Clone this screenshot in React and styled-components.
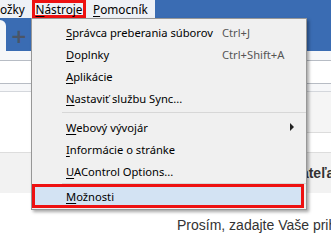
import styled, { createGlobalStyle } from "styled-components";

const GlobalStyle = createGlobalStyle`
    html, body {
        margin: 0;
        padding: 0;
        width: 331px;
        height: 246px;
        overflow: hidden;
        background: #ffffff;
    }
`;

const menuItems = [
    { label: "Správca preberania súborov", key: 0, shortcut: "Ctrl+J" },
    { label: "Doplnky", key: 0, shortcut: "Ctrl+Shift+A" },
    { label: "Aplikácie", key: 0 },
    { label: "Nastaviť službu Sync...", key: 0 },
    { separator: true },
    { label: "Webový vývojár", key: 0, submenu: true },
    { label: "Informácie o stránke", key: 0 },
    { label: "UAControl Options...", key: 0 },
    { separator: true, tight: true },
    { label: "Možnosti", key: 0, marked: true },
];

const AccessKey = ({ text, index }) => (
    <>
        {text.slice(0, index)}
        <U>{text.charAt(index)}</U>
        {text.slice(index + 1)}
    </>
);

const App = () => {
    return (
        <Window>
            <GlobalStyle />
            <MenuBar>
                <BarItems>
                    <BarItem $width="32px" $align="flex-start">ožky</BarItem>
                    <BarItem $width="54px" $marked><AccessKey text="Nástroje" index={0} /></BarItem>
                    <BarItem $pad="0 0 0 7px"><AccessKey text="Pomocník" index={0} /></BarItem>
                </BarItems>
            </MenuBar>
            <TabStrip>
                <TabEdge />
                <NewTab>+</NewTab>
            </TabStrip>
            <NavBar>
                <UrlField />
            </NavBar>
            <Page>
                <PageTop />
                <PageHeader>Prihlásenie používateľa</PageHeader>
                <PageText>Prosím, zadajte Vaše prihlasovacie údaje</PageText>
            </Page>

            <Dropdown>
                {menuItems.map((item, index) =>
                    item.separator ? (
                        <Separator key={index} $tight={item.tight} />
                    ) : (
                        <Item key={index} $marked={item.marked}>
                            <Label><AccessKey text={item.label} index={item.key} /></Label>
                            {item.shortcut && <Shortcut>{item.shortcut}</Shortcut>}
                            {item.submenu && <Arrow />}
                        </Item>
                    )
                )}
            </Dropdown>
        </Window>
    );
};

export default App;

const Window = styled.div`
    position: relative;
    width: 331px;
    height: 246px;
    overflow: hidden;
    display: flex;
    flex-direction: column;
    font-family: "Noto Sans", "Open Sans", sans-serif;
    font-size: 11.2px;
    color: #000;
`;
const U = styled.span`
    text-decoration: underline;
    text-underline-offset: 2px;
`;
const MenuBar = styled.div`
    display: flex;
    height: 18px;
    background: #3a6cb3;
`;
const BarItems = styled.div`
    display: flex;
    width: 155px;
    background: #eef1f6;
    font-size: 11.8px;
`;
const BarItem = styled.div`
    display: flex;
    align-items: center;
    justify-content: ${(p) => p.$align || "center"};
    height: 18px;
    width: ${(p) => p.$width || "auto"};
    padding: ${(p) => p.$pad || "0"};
    box-sizing: border-box;
    box-shadow: ${(p) => (p.$marked ? "inset 0 0 0 3px #ee1111" : "none")};
    white-space: nowrap;
    overflow: hidden;
`;
const TabStrip = styled.div`
    display: flex;
    height: 33px;
    background: #3a6cb3;
`;
const TabEdge = styled.div`
    width: 6px;
    margin-top: 2px;
    background: #f4f6f9;
    border-top-right-radius: 6px;
`;
const NewTab = styled.div`
    width: 26px;
    display: flex;
    align-items: center;
    justify-content: center;
    padding-top: 3px;
    font-family: "DejaVu Sans", sans-serif;
    font-size: 20px;
    font-weight: bold;
    color: #4a5566;
`;
const NavBar = styled.div`
    height: 41px;
    box-sizing: border-box;
    padding-top: 9px;
    background: #f6f7f9;
    border-bottom: 1px solid #d4d7dc;
`;
const UrlField = styled.div`
    height: 24px;
    box-sizing: border-box;
    background: #fff;
    border-top: 1px solid #b7bcc4;
    border-bottom: 1px solid #b7bcc4;
`;
const Page = styled.div`
    flex: 1;
    display: flex;
    flex-direction: column;
    background: #fff;
    font-family: "Liberation Sans", Arial, sans-serif;
    color: #333;
`;
const PageTop = styled.div`
    height: 40px;
    margin-left: 160px;
    border-bottom: 1px solid #dcdcdc;
    background: #f5f5f5;
`;
const PageHeader = styled.div`
    margin-top: 19px;
    height: 40px;
    display: flex;
    align-items: center;
    padding-left: 178px;
    background: #f2f2f2;
    border-top: 1px solid #dddddd;
    font-size: 14px;
    font-weight: bold;
    white-space: nowrap;
`;
const PageText = styled.div`
    margin-top: 24px;
    padding-left: 177px;
    font-size: 14px;
    white-space: nowrap;
`;
const Dropdown = styled.div`
    position: absolute;
    left: 31px;
    top: 18px;
    width: 276px;
    box-sizing: border-box;
    padding: 2px 0 1px;
    background: #f0f0f0;
    border: 1px solid #979797;
    box-shadow: 2px 2px 3px rgba(0, 0, 0, 0.35);
    display: flex;
    flex-direction: column;
`;
const Item = styled.div`
    display: flex;
    align-items: center;
    height: ${(p) => (p.$marked ? "24px" : "22px")};
    box-sizing: border-box;
    margin-right: ${(p) => (p.$marked ? "2px" : "0")};
    padding: 0 10px 0 34px;
    background: ${(p) => (p.$marked ? "#d3e3f3" : "transparent")};
    border: ${(p) => (p.$marked ? "3px solid #ee1111" : "none")};
    padding-left: ${(p) => (p.$marked ? "31px" : "34px")};
    position: relative;
`;
const Label = styled.span`
    white-space: nowrap;
    flex: 1;
`;
const Shortcut = styled.span`
    position: absolute;
    left: 190px;
    color: #555;
    white-space: nowrap;
`;
const Arrow = styled.span`
    width: 0;
    height: 0;
    margin-right: 2px;
    border-top: 4px solid transparent;
    border-bottom: 4px solid transparent;
    border-left: 4px solid #222;
`;
const Separator = styled.div`
    height: ${(p) => (p.$tight ? "1px" : "7px")};
    margin: ${(p) => (p.$tight ? "1px 0 0 30px" : "0 0 0 30px")};
    display: flex;
    align-items: center;
    &::before {
        content: "";
        flex: 1;
        height: 1px;
        background: #d7d7d7;
    }
`;
